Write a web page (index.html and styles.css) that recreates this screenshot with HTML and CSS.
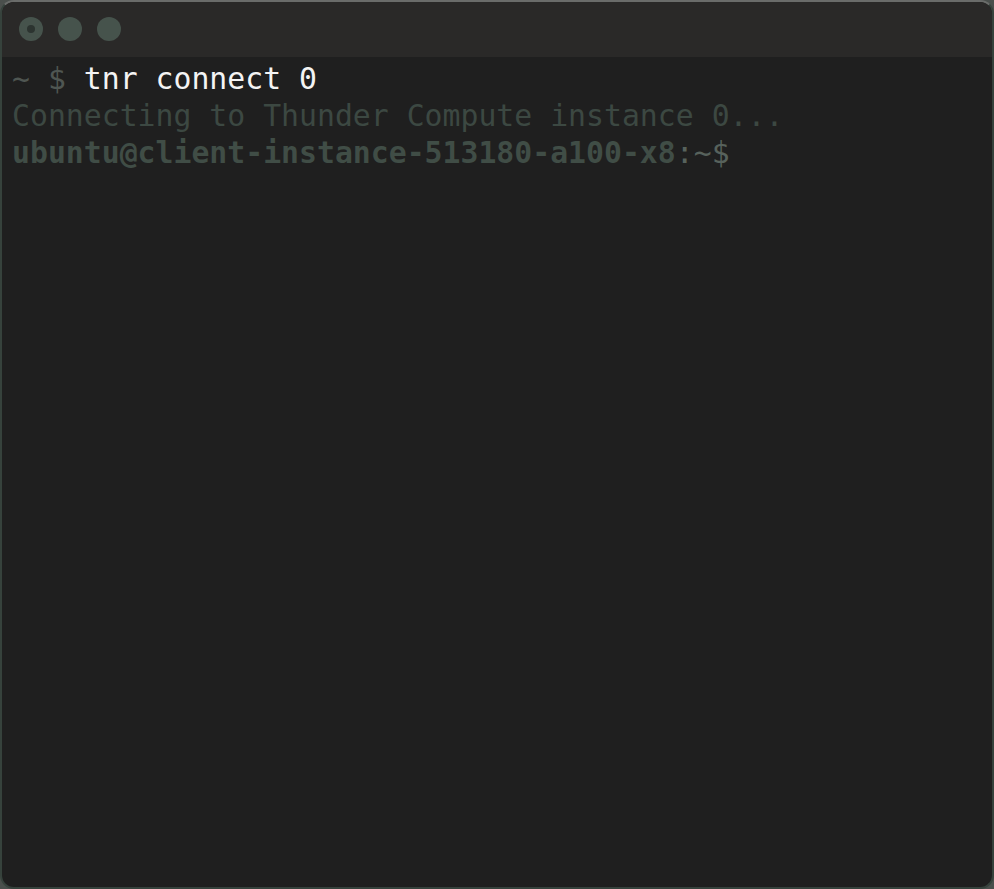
FILE: index.html
```html
<!DOCTYPE html>
<html>
<head>
<meta charset="utf-8">
<link rel="stylesheet" href="styles.css">
</head>
<body>
<div class="window">
  <div class="titlebar">
    <span class="light close"><span class="glyph"></span></span>
    <span class="light"></span>
    <span class="light"></span>
  </div>
  <div class="term">
    <div class="line"><span class="prompt">~ $ </span><span class="cmd">tnr connect 0</span></div>
    <div class="line out">Connecting to Thunder Compute instance 0...</div>
    <div class="line"><span class="host">ubuntu@client-instance-513180-a100-x8</span><span class="path">:~$</span></div>
  </div>
</div>
</body>
</html>
```
FILE: styles.css
```css
html, body {
  margin: 0;
  padding: 0;
  background: #4a4f4c;
}
.window {
  box-sizing: border-box;
  width: 994px;
  height: 889px;
  border: 2px solid #36423c;
  border-top-color: #6a6c6a;
  border-radius: 14px;
  background: #1f1f1f;
  overflow: hidden;
  display: flex;
  flex-direction: column;
}
.titlebar {
  height: 55px;
  flex: none;
  background: #2a2928;
  display: flex;
  align-items: center;
  gap: 15px;
  padding-left: 17px;
  padding-bottom: 2px;
  box-sizing: border-box;
}
.light {
  width: 24px;
  height: 24px;
  border-radius: 50%;
  background: #46534c;
  display: flex;
  align-items: center;
  justify-content: center;
}
.glyph {
  width: 8px;
  height: 8px;
  border-radius: 50%;
  background: #2c3430;
}
.term {
  padding: 3px 10px;
  font-family: "DejaVu Sans Mono", "Liberation Mono", monospace;
  font-size: 29.8px;
  line-height: 37px;
}
.line { white-space: pre; }
.prompt { color: #4f5652; }
.cmd { color: #f4f4f4; }
.out { color: #3c4842; }
.host { color: #404d46; font-weight: bold; }
.path { color: #57625c; }
```
